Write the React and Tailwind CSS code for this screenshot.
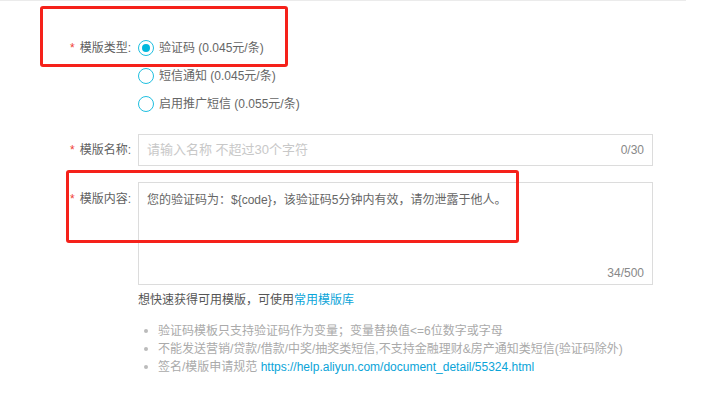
import React from "react";

const FONT = { fontFamily: '"Liberation Sans", Arial, "Noto Sans CJK SC", sans-serif' };

function Label({ children }) {
  return (
    <div className="w-[131px] shrink-0 flex justify-end items-center text-[12px] text-[#606060] leading-[18px]">
      <span className="text-[#f04134] mr-[5px] text-[12px]">*</span>
      <span>{children}</span>
    </div>
  );
}

function Radio({ checked, children }) {
  return (
    <div className="h-[28px] flex items-center">
      <div className="w-[16px] h-[16px] rounded-full border-[1.5px] border-[#1fbfe0] flex items-center justify-center bg-white">
        {checked && <div className="w-[8px] h-[8px] rounded-full bg-[#00b8dd]" />}
      </div>
      <span className="ml-[5px] text-[12px] text-[#666]">{children}</span>
    </div>
  );
}

function Bullet({ children }) {
  return (
    <li className="flex items-center h-[18px] text-[12px] text-[#aaa]">
      <span className="w-[4px] h-[4px] rounded-full bg-[#bbb] ml-[6px] mr-[10px]" />
      <span>{children}</span>
    </li>
  );
}

export default function App() {
  return (
    <div className="relative w-[705px] h-[405px] bg-white overflow-hidden" style={FONT}>
      <div className="h-px w-[686px] bg-[#ebebeb]" />

      <div className="mt-[33px] flex gap-[7px]">
        <div className="h-[28px] flex">
          <Label>模版类型:</Label>
        </div>
        <div className="flex flex-col">
          <Radio checked>验证码 (0.045元/条)</Radio>
          <Radio>短信通知 (0.045元/条)</Radio>
          <Radio>启用推广短信 (0.055元/条)</Radio>
        </div>
      </div>

      <div className="mt-[16px] flex gap-[7px]">
        <Label>模版名称:</Label>
        <div className="w-[515px] h-[32px] border border-[#dcdcdc] flex items-center justify-between pl-[8px] pr-[8px]">
          <span className="text-[#c8c8c8] text-[13px]">请输入名称 不超过30个字符</span>
          <span className="text-[#888] text-[12px]">0/30</span>
        </div>
      </div>

      <div className="mt-[16px] flex gap-[7px]">
        <div className="pt-[8px]">
          <Label>模版内容:</Label>
        </div>
        <div className="w-[515px] h-[103px] border border-[#dcdcdc] flex flex-col justify-between pl-[8px] pr-[8px] pt-[8px] pb-[3px] text-[12px]">
          <span className="text-[#666] leading-[18px]">您的验证码为：${"{code}"}，该验证码5分钟内有效，请勿泄露于他人。</span>
          <span className="self-end text-[#888] leading-[16px]">34/500</span>
        </div>
      </div>

      <div className="mt-[6px] ml-[138px] text-[12px] leading-[18px] text-[#555]">
        想快速获得可用模版，可使用<span className="text-[#0aa4d8]">常用模版库</span>
      </div>

      <ul className="mt-[13px] ml-[138px]">
        <Bullet>验证码模板只支持验证码作为变量；变量替换值&lt;=6位数字或字母</Bullet>
        <Bullet>不能发送营销/贷款/借款/中奖/抽奖类短信,不支持金融理财&amp;房产通知类短信(验证码除外)</Bullet>
        <Bullet>
          签名/模版申请规范 <span className="text-[#0aa4d8]">https://help.aliyun.com/document_detail/55324.html</span>
        </Bullet>
      </ul>

      <div className="absolute left-[40px] top-[6px] w-[248px] h-[61px] border-[3px] border-[#f5211a] rounded-[3px]" />
      <div className="absolute left-[66px] top-[170px] w-[453px] h-[73px] border-[3px] border-[#f5211a] rounded-[3px]" />
    </div>
  );
}
